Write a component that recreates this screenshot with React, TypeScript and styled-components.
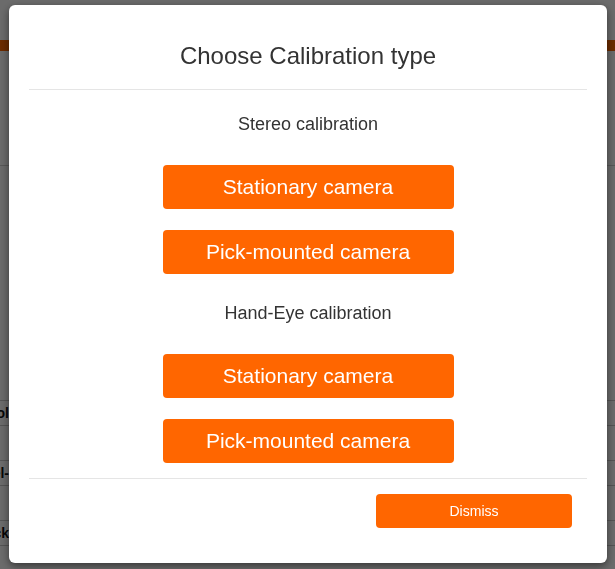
import React from "react";
import styled, { createGlobalStyle } from "styled-components";

const Global = createGlobalStyle`
  html, body { margin: 0; padding: 0; background: #fff; }
  body { font-family: "Liberation Sans", Arial, Helvetica, sans-serif; }
`;

/* ---------- page behind the dialog ---------- */
const Page = styled.div`
  width: 615px;
  height: 569px;
  overflow: hidden;
  display: flex;
  flex-direction: column;
  background: #fff;
  & > * {
    flex-shrink: 0;
  }
`;
const TopNav = styled.div`
  height: 40px;
  background: #fff;
`;
const AccentBar = styled.div`
  height: 11px;
  background: #ff6600;
`;
const Intro = styled.div`
  height: 114px;
  border-bottom: 1px solid #d0d0d0;
`;
const Spacer = styled.div`
  height: 234px;
`;
const TableRow = styled.div`
  height: 59px;
  border-top: 1px solid #c8c8c8;
  display: flex;
  flex-direction: column;
`;
const RowMain = styled.div`
  height: 24px;
  border-bottom: 1px solid #c8c8c8;
  display: flex;
  align-items: center;
`;
const RowLabel = styled.div`
  width: 9px;
  overflow: hidden;
  display: flex;
  justify-content: flex-end;
  white-space: nowrap;
  font-weight: 700;
  font-size: 14px;
  color: #111;
`;

/* ---------- dialog ---------- */
const Backdrop = styled.div`
  position: fixed;
  inset: 0;
  background: rgba(0, 0, 0, 0.58);
  padding: 5px 8px 0 9px;
  box-sizing: border-box;
`;
const Modal = styled.div`
  width: 598px;
  height: 558px;
  background: #fff;
  border-radius: 6px;
  box-shadow: 0 3px 9px rgba(0, 0, 0, 0.5);
  display: flex;
  flex-direction: column;
`;
const Header = styled.div`
  margin: 0 20px;
  padding: 38px 0 20px;
  border-bottom: 1px solid #e5e5e5;
  text-align: center;
`;
const Title = styled.h4`
  margin: 0;
  font-size: 24px;
  line-height: 26px;
  font-weight: 400;
  color: #333;
`;
const Body = styled.div`
  padding: 24px 0 15px;
  display: flex;
  flex-direction: column;
  align-items: center;
  gap: 29px;
`;
const Group = styled.div`
  display: flex;
  flex-direction: column;
  align-items: center;
`;
const GroupLabel = styled.div`
  font-size: 18px;
  line-height: 21px;
  color: #333;
  margin-bottom: 30px;
`;
const ButtonStack = styled.div`
  display: flex;
  flex-direction: column;
  gap: 21px;
`;
const OrangeButton = styled.button<{ $size: "lg" | "sm" }>`
  width: ${(p) => (p.$size === "lg" ? "291px" : "196px")};
  height: ${(p) => (p.$size === "lg" ? "44px" : "34px")};
  font-size: ${(p) => (p.$size === "lg" ? "21px" : "14px")};
  background: #ff6600;
  color: #fff;
  border: 0;
  border-radius: 4px;
  padding: 0;
  font-family: inherit;
  cursor: pointer;
`;
const Footer = styled.div`
  margin: 0 20px;
  padding: 15px 15px 0 0;
  border-top: 1px solid #e5e5e5;
  display: flex;
  justify-content: flex-end;
`;

const groups = [
  { label: "Stereo calibration", options: ["Stationary camera", "Pick-mounted camera"] },
  { label: "Hand-Eye calibration", options: ["Stationary camera", "Pick-mounted camera"] },
];

const rows = ["Tool", "Pixel-", "Pick"];

export default function App() {
  return (
    <>
      <Global />
      <Page>
        <TopNav />
        <AccentBar />
        <Intro />
        <Spacer />
        {rows.map((r) => (
          <TableRow key={r}>
            <RowMain>
              <RowLabel>
                <span>{r}</span>
              </RowLabel>
            </RowMain>
          </TableRow>
        ))}
      </Page>
      <Backdrop>
        <Modal>
          <Header>
            <Title>Choose Calibration type</Title>
          </Header>
          <Body>
            {groups.map((g) => (
              <Group key={g.label}>
                <GroupLabel>{g.label}</GroupLabel>
                <ButtonStack>
                  {g.options.map((o) => (
                    <OrangeButton key={o} $size="lg">
                      {o}
                    </OrangeButton>
                  ))}
                </ButtonStack>
              </Group>
            ))}
          </Body>
          <Footer>
            <OrangeButton $size="sm">Dismiss</OrangeButton>
          </Footer>
        </Modal>
      </Backdrop>
    </>
  );
}
